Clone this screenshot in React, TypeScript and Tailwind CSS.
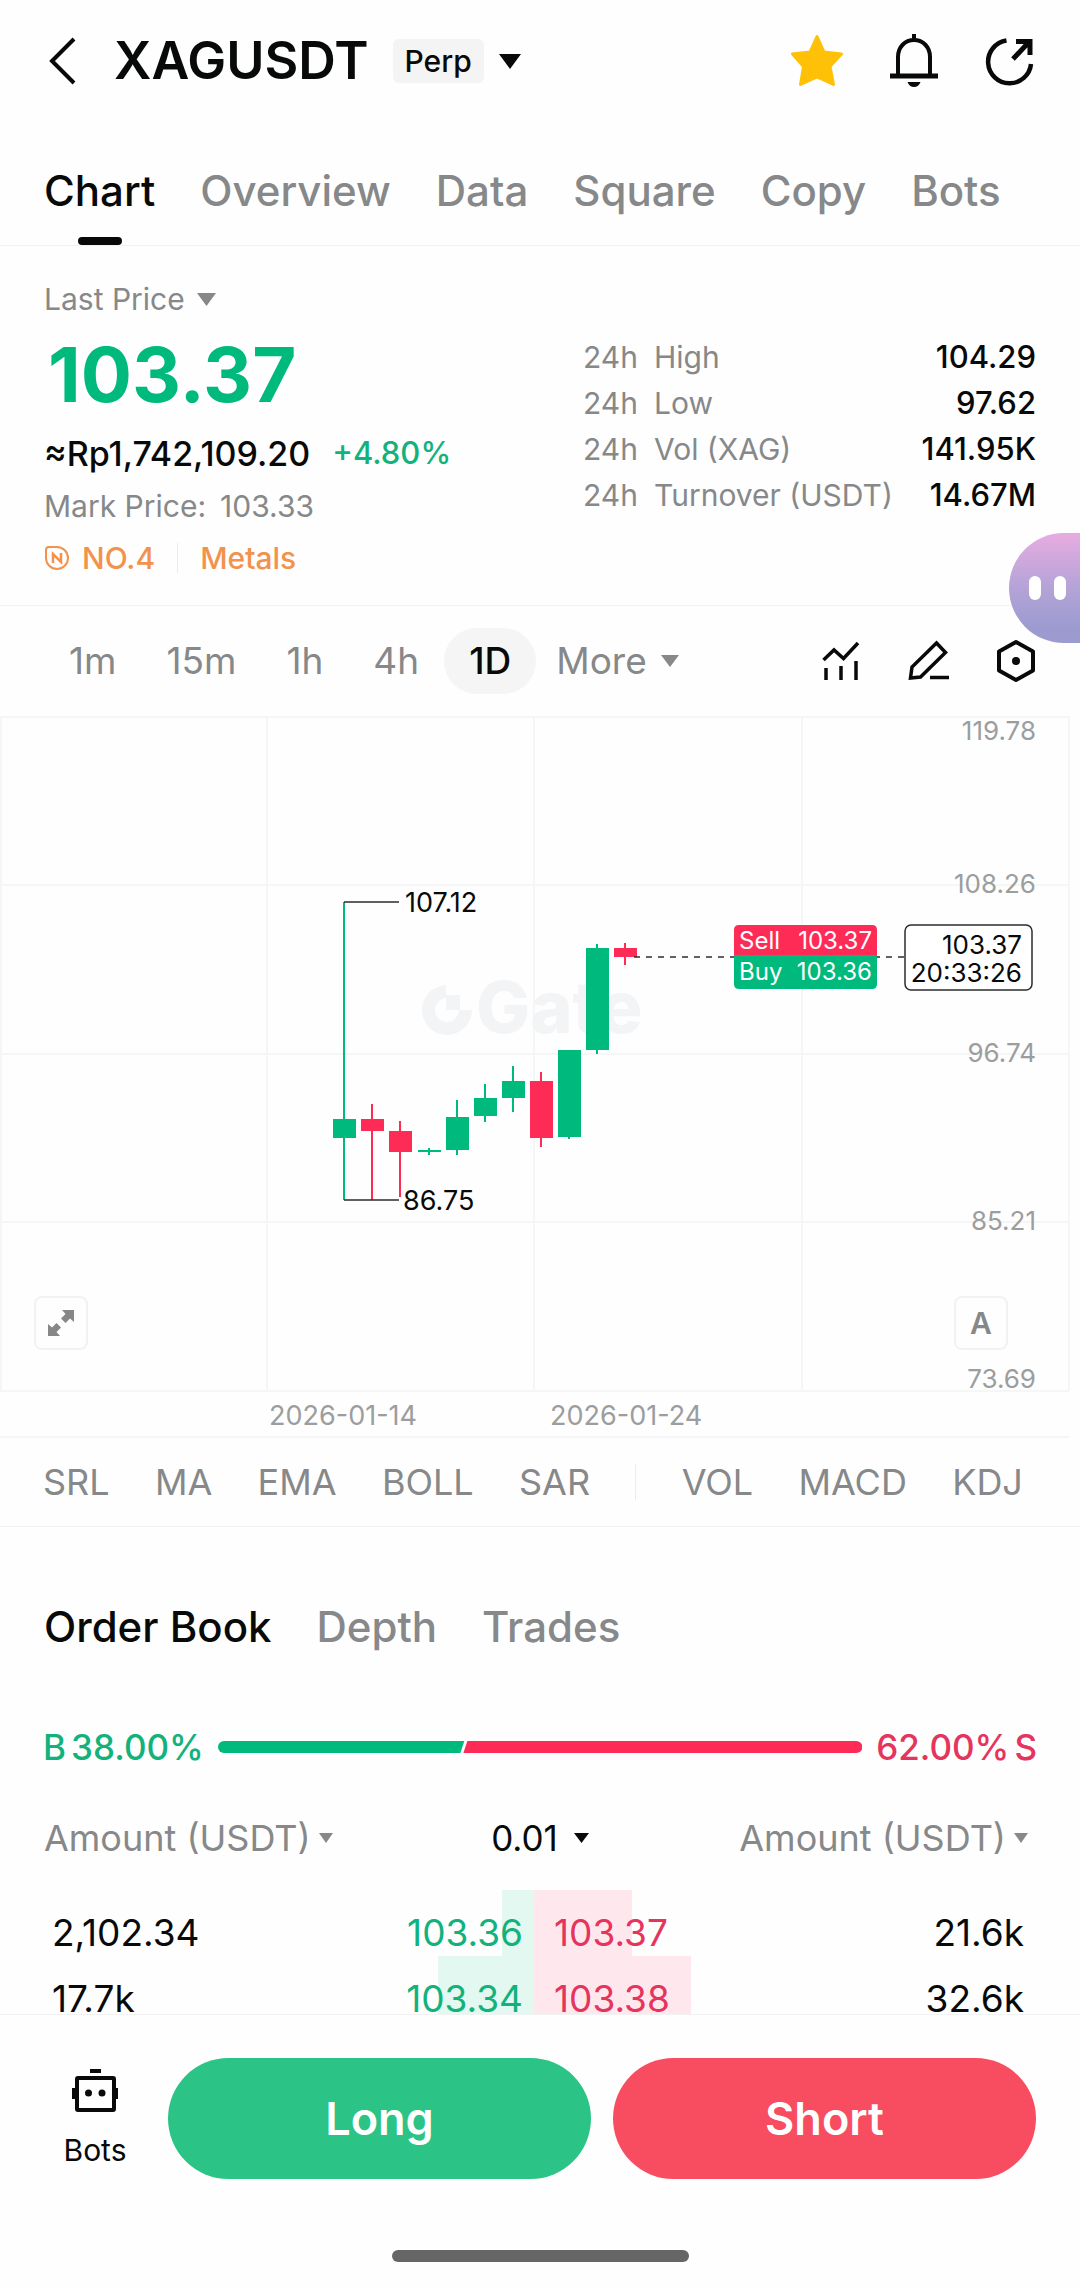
import { useState } from 'react'
import clsx from 'clsx'

const TABS = ['Chart', 'Overview', 'Data', 'Square', 'Copy', 'Bots']
const INTERVALS = ['1m', '15m', '1h', '4h', '1D']
const MAIN_INDICATORS = ['SRL', 'MA', 'EMA', 'BOLL', 'SAR']
const SUB_INDICATORS = ['VOL', 'MACD', 'KDJ']
const BOOK_TABS = ['Order Book', 'Depth', 'Trades']

const STATS = [
  { label: 'High', value: '104.29' },
  { label: 'Low', value: '97.62' },
  { label: 'Vol (XAG)', value: '141.95K' },
  { label: 'Turnover (USDT)', value: '14.67M' },
]

// depth is the share of the price column that is filled, in percent
const ORDERS = [
  { bidAmount: '2,102.34', bid: '103.36', bidDepth: 13, ask: '103.37', askAmount: '21.6k', askDepth: 40 },
  { bidAmount: '17.7k', bid: '103.34', bidDepth: 39, ask: '103.38', askAmount: '32.6k', askDepth: 64 },
]

const UP = '#00b97c'
const DOWN = '#ff2b57'

// chart space: x centre, body top/bottom, wick top/bottom
const CANDLES = [
  { x: 344, top: 403, bottom: 422, high: 186, low: 484, up: true },
  { x: 372, top: 403, bottom: 415, high: 388, low: 484, up: false },
  { x: 400, top: 415, bottom: 436, high: 405, low: 481, up: false },
  { x: 429, top: 434, bottom: 436, high: 432, low: 439, up: true },
  { x: 457, top: 401, bottom: 434, high: 384, low: 439, up: true },
  { x: 485, top: 382, bottom: 400, high: 368, low: 406, up: true },
  { x: 513, top: 365, bottom: 382, high: 350, low: 396, up: true },
  { x: 541, top: 365, bottom: 422, high: 356, low: 431, up: false },
  { x: 569, top: 334, bottom: 421, high: 334, low: 423, up: true },
  { x: 597, top: 232, bottom: 334, high: 228, low: 338, up: true },
  { x: 625, top: 232, bottom: 241, high: 227, low: 249, up: false },
]

const PRICE_LABELS = [
  { y: 24, text: '119.78' },
  { y: 177, text: '108.26' },
  { y: 346, text: '96.74' },
  { y: 514, text: '85.21' },
  { y: 672, text: '73.69' },
]

function Caret({ className }: { className?: string }) {
  return (
    <svg viewBox="0 0 20 14" preserveAspectRatio="none" className={clsx('shrink-0 fill-current', className)} aria-hidden="true">
      <path d="M0 0H20L10 14Z" />
    </svg>
  )
}

interface DropdownProps {
  label: string
  value: string
  className?: string
  caret: string
}

function Dropdown({ label, value, className, caret }: DropdownProps) {
  return (
    <label className={clsx('flex h-10 items-center', className)}>
      <select aria-label={label} className="field-sizing-content h-10 cursor-pointer appearance-none bg-transparent leading-10 outline-none">
        <option>{value}</option>
      </select>
      <Caret className={caret} />
    </label>
  )
}

function Header() {
  return (
    <header className="flex h-[122px] items-center pr-[46px] pl-12">
      <button aria-label="Back" className="cursor-pointer">
        <svg viewBox="0 0 28 48" className="h-12 w-7" fill="none" stroke="#080a0a" strokeWidth="4">
          <path d="M26 2 4 24 26 46" />
        </svg>
      </button>
      <h1 className="ml-[38px] text-[52px] leading-[60px] font-semibold">XAGUSDT</h1>
      <button className="ml-6 flex cursor-pointer items-center gap-[15px]">
        <span className="flex h-[44px] items-center rounded-md bg-[#f4f4f4] px-3 text-[30px] font-medium">Perp</span>
        <Caret className="h-[15px] w-[22px]" />
      </button>
      <div className="ml-auto flex items-center gap-[46px]">
        <button aria-label="Remove from favorites" className="cursor-pointer">
          <svg viewBox="0 0 54 54" className="h-[54px] w-[54px]" fill="#ffc107" stroke="#ffc107" strokeWidth="3" strokeLinejoin="round">
            <path d="M27 2.500 34 18 51.500 20 40 32.500 43.500 50.500 27 43 10.500 50.500 13.500 32.500 2.500 20 20 18Z" />
          </svg>
        </button>
        <button aria-label="Price alert" className="cursor-pointer">
          <svg viewBox="0 0 48 54" className="h-[54px] w-12" fill="none" stroke="#080a0a" strokeWidth="4">
            <path d="M24 0V6M8 41V23C8 13 15 6 24 6S40 13 40 23V41" />
            <path d="M0 42H48" strokeWidth="5" />
            <path d="M17.500 48H30.500C29.500 51 27 53 24 53S18.500 51 17.500 48Z" fill="#080a0a" stroke="none" />
          </svg>
        </button>
        <button aria-label="Share" className="cursor-pointer">
          <svg viewBox="0 0 50 50" className="h-[50px] w-[50px]" fill="none" stroke="#080a0a" strokeWidth="4.500">
            <path d="M22.500 4.500A21.500 21.500 0 1 0 47 28" />
            <path d="M29 23 45 6M32 5.500H46V19" strokeWidth="5" />
          </svg>
        </button>
      </div>
    </header>
  )
}

function SummaryPanel() {
  return (
    <section className="flex justify-between border-b border-[#f1f2f2] pr-11 pb-6 pl-11">
      <div className="pt-[33px]">
        <Dropdown label="Price type" value="Last Price" className="gap-3 text-[30px] text-[#868889]" caret="h-[13px] w-[19px]" />
        <p className="pl-1 text-[76px] leading-[110px] font-bold text-[#00b97c]">103.37</p>
        <p className="flex h-12 items-center gap-[22px] text-[34px] font-medium">
          <span>≈Rp1,742,109.20</span>
          <span className="text-[31px] text-[#12b27c]">+4.80%</span>
        </p>
        <p className="flex h-[58px] items-center gap-[14px] text-[30px] text-[#868889]">
          <span>Mark Price:</span>
          <span>103.33</span>
        </p>
        <div className="flex h-[46px] items-center text-[30px] font-medium text-[#f2924c]">
          <a href="#ranking" className="flex items-center gap-3">
            <svg viewBox="0 0 26 26" className="h-[26px] w-[26px]" fill="none" stroke="currentColor" strokeWidth="2" aria-hidden="true">
              <path d="M5 2H13A11 11 0 1 1 2 13V5A3 3 0 0 1 5 2Z" />
              <path d="M9 18V9L17 17V8" strokeWidth="2.500" />
            </svg>
            NO.4
          </a>
          <span className="mx-[22px] h-[30px] w-px bg-[#ebecec]" />
          <a href="#metals">Metals</a>
        </div>
      </div>
      <dl className="w-[453px] pt-[88px] text-[30px]">
        {STATS.map((stat) => (
          <div key={stat.label} className="flex h-[46px] items-center">
            <dt className="flex text-[#868889]">
              <span className="w-[71px]">24h</span>
              {stat.label}
            </dt>
            <dd className="ml-auto text-[31px] font-medium">{stat.value}</dd>
          </div>
        ))}
      </dl>
    </section>
  )
}

function AssistantBubble() {
  return (
    <button
      aria-label="Open assistant"
      className="absolute top-[533px] right-0 flex h-[110px] w-[71px] cursor-pointer items-center gap-[13px] rounded-l-[55px] bg-linear-to-b from-[#e3abe0] from-5% via-[#b8a4d8] via-45% to-[#9c9bd0] to-85% pl-5"
    >
      <span className="h-6 w-3 rounded-full bg-white" />
      <span className="h-6 w-3 rounded-full bg-white" />
    </button>
  )
}

function ChartToolbar() {
  const [interval, setInterval] = useState('1D')

  return (
    <div className="flex h-[110px] items-center justify-between px-11">
      <div className="flex items-center text-[37px] text-[#868889]">
        {INTERVALS.map((item) => (
          <button
            key={item}
            onClick={() => setInterval(item)}
            className={clsx('h-[66px] cursor-pointer rounded-full px-[25px]', item === interval && 'bg-[#f5f5f5] font-medium text-[#080a0a]')}
          >
            {item}
          </button>
        ))}
        <button className="flex cursor-pointer items-center gap-[14px] pl-[20px]">
          More
          <Caret className="h-3 w-[18px]" />
        </button>
      </div>
      <div className="flex items-center gap-[46px]">
        <button aria-label="Indicators" className="cursor-pointer">
          <svg viewBox="0 0 40 40" className="h-10 w-10" fill="none" stroke="#080a0a" strokeWidth="3.500">
            <path d="M1.500 19 12 9 21.500 17.500 36 2M4 27V39M19 25V39M34 20V39" />
          </svg>
        </button>
        <button aria-label="Drawing tools" className="cursor-pointer">
          <svg viewBox="0 0 42 42" className="h-[42px] w-[42px]" fill="none" stroke="#080a0a" strokeWidth="3.500">
            <path d="M28.500 3 37.500 12.500 12.500 37 2.500 38 4 27ZM22 37.500H41" />
          </svg>
        </button>
        <button aria-label="Chart settings" className="cursor-pointer">
          <svg viewBox="0 0 40 44" className="h-11 w-10" fill="none" stroke="#080a0a" strokeWidth="4" strokeLinejoin="round">
            <path d="M20 3 37 12.500V31.500L20 41 3 31.500V12.500Z" />
            <circle cx="20" cy="22" r="4" fill="#080a0a" stroke="none" />
          </svg>
        </button>
      </div>
    </div>
  )
}

function PriceChart() {
  return (
    <div className="relative">
      <svg viewBox="0 0 1080 722" className="block w-full" role="img" aria-label="XAGUSDT daily candles">
        <g stroke="#f5f6f6" strokeWidth="2">
          <path d="M0 1H1069M0 169H1069M0 338H1069M0 506H1069M0 675H1069M0 721H1069" />
          <path d="M1 0V675M267 0V675M534 0V675M802 0V675M1069 0V675" />
        </g>

        {/* Watermark */}
        <g fill="#f2f4f5">
          <path d="M446 269A25 25 0 1 0 472 294H459A12 12 0 1 1 446 282Z" />
          <path d="M446 279H460V294H446Z" />
          <text x="476" y="317" fontSize="72" fontWeight="800">Gate</text>
        </g>

        {CANDLES.map((candle) => (
          <g key={candle.x} fill={candle.up ? UP : DOWN}>
            <rect x={candle.x - 1} y={candle.high} width="2" height={candle.low - candle.high} />
            <rect x={candle.x - 11} y={candle.top} width="23" height={candle.bottom - candle.top} />
          </g>
        ))}

        <path d="M344 186H399M344 484H399" stroke="#2b2d2d" strokeWidth="1.500" />
        <path d="M634 241H905" stroke="#2b2d2d" strokeWidth="1.500" strokeDasharray="6 6" />
        <g fontSize="27" fill="#080a0a">
          <text x="405" y="196">107.12</text>
          <text x="403" y="494">86.75</text>
        </g>

        <g fontSize="26" fill="#9b9d9e">
          {PRICE_LABELS.map((label) => (
            <text key={label.text} x="1036" y={label.y} textAnchor="end">{label.text}</text>
          ))}
        </g>
        <g fontSize="27" fill="#9b9d9e">
          <text x="269" y="709">2026-01-14</text>
          <text x="550" y="709">2026-01-24</text>
        </g>

        {/* Best ask / bid */}
        <path d="M734 239V214Q734 209 739 209H872Q877 209 877 214V239Z" fill={DOWN} />
        <path d="M734 239H877V268Q877 273 872 273H739Q734 273 734 268Z" fill={UP} />
        <g fontSize="24" fill="#fff">
          <text x="739" y="233">Sell</text>
          <text x="872" y="233" textAnchor="end">103.37</text>
          <text x="739" y="264">Buy</text>
          <text x="872" y="264" textAnchor="end">103.36</text>
        </g>

        <rect x="905" y="209" width="127" height="65" rx="6" fill="#fff" stroke="#2b2d2d" strokeWidth="1.500" />
        <g fontSize="26" fill="#080a0a" textAnchor="end">
          <text x="1022" y="238">103.37</text>
          <text x="1022" y="266">20:33:26</text>
        </g>
      </svg>

      <button aria-label="Full screen" className="absolute bottom-[88px] left-[34px] flex h-[54px] w-[54px] cursor-pointer items-center justify-center rounded-lg border-2 border-[#f1f2f2] bg-[#fefefe]">
        <svg viewBox="0 0 26 26" className="h-[26px] w-[26px]" fill="#858788">
          <path d="M14 0H26V12L22 8.500 17.500 13 13 8.500 17.500 4ZM0 14 4 17.500 8.500 13 13 17.500 8.500 22 12 26H0Z" />
        </svg>
      </button>
      <button aria-label="Auto scale" className="absolute right-[72px] bottom-[88px] flex h-[54px] w-[54px] cursor-pointer items-center justify-center rounded-lg border-2 border-[#f1f2f2] bg-[#fefefe] text-[30px] font-semibold text-[#858788]">
        A
      </button>
    </div>
  )
}

function IndicatorBar() {
  return (
    <div className="flex h-[89px] items-center justify-between border-b border-[#f1f2f2] pr-[57px] pl-[43px] text-[36px] text-[#868889]">
      {MAIN_INDICATORS.map((name) => (
        <button key={name} className="cursor-pointer">{name}</button>
      ))}
      <span className="h-9 w-px bg-[#ebecec]" />
      {SUB_INDICATORS.map((name) => (
        <button key={name} className="cursor-pointer">{name}</button>
      ))}
    </div>
  )
}

function OrderBook() {
  const [tab, setTab] = useState('Order Book')

  return (
    <section className="pt-[75px]">
      <div className="flex gap-[45px] px-11 text-[42px] leading-[50px] font-medium">
        {BOOK_TABS.map((item) => (
          <button key={item} onClick={() => setTab(item)} className={clsx('cursor-pointer', item !== tab && 'text-[#868889]')}>
            {item}
          </button>
        ))}
      </div>

      <div className="mt-[75px] flex h-10 items-center gap-[14px] px-[43px] text-[35px] font-medium">
        <span className="flex gap-[5px] text-[#12b27c]">
          <span>B</span>
          <span>38.00%</span>
        </span>
        <svg viewBox="0 0 646 12" preserveAspectRatio="none" className="h-3 min-w-0 flex-1" aria-hidden="true">
          <path d="M6 0H247L243 12H6A6 6 0 0 1 6 0Z" fill={UP} />
          <path d="M250 0H640A6 6 0 0 1 640 12H246Z" fill={DOWN} />
        </svg>
        <span className="flex gap-[5px] text-[#e5345d]">
          <span>62.00%</span>
          <span>S</span>
        </span>
      </div>

      <div className="mt-[51px] grid grid-cols-[1fr_auto_1fr] px-11 text-[36px] text-[#868889]">
        <Dropdown label="Bid amount unit" value="Amount (USDT)" className="gap-2" caret="h-2.5 w-[14px]" />
        <Dropdown label="Price step" value="0.01" className="gap-4 text-[35px] text-[#080a0a]" caret="h-2.5 w-[15px]" />
        <Dropdown label="Ask amount unit" value="Amount (USDT)" className="justify-self-end gap-2 pr-2" caret="h-2.5 w-[14px]" />
      </div>

      <div className="mt-8 pr-14 pl-11">
        <table className="w-full table-fixed text-[37px] leading-[30px]">
          <tbody>
            {ORDERS.map((order) => (
              <tr key={order.bid} className="h-[66px] align-top last:h-[58px]">
                <td className="p-0 pt-7 pl-2">{order.bidAmount}</td>
                <td className="relative p-0 pt-7 pr-[11px] text-right text-[#12b27c]">
                  <span className="absolute inset-y-0 right-0 bg-[#e3f8f1]" style={{ width: `${order.bidDepth}%` }} />
                  <span className="relative">{order.bid}</span>
                </td>
                <td className="relative p-0 pt-7 pl-5 text-[#e5345d]">
                  <span className="absolute inset-y-0 left-0 bg-[#ffe8ed]" style={{ width: `${order.askDepth}%` }} />
                  <span className="relative">{order.ask}</span>
                </td>
                <td className="p-0 pt-7 text-right">{order.askAmount}</td>
              </tr>
            ))}
          </tbody>
        </table>
      </div>
    </section>
  )
}

function TradeBar() {
  return (
    <footer className="border-t border-[#f1f2f2] bg-[#fefefe] pt-[43px] pb-[27px]">
      <div className="flex items-center pr-11 pl-[62px]">
        <button className="flex w-[66px] cursor-pointer flex-col items-center gap-4 pt-1 text-[30px]">
          <svg viewBox="0 0 46 44" className="h-11 w-[46px]" fill="none" stroke="#080a0a" strokeWidth="4" aria-hidden="true">
            <rect x="5" y="10" width="37" height="32" rx="1" />
            <path d="M18 3H29M2 20V31M44 20V31" />
            <circle cx="16.500" cy="25" r="3.500" fill="#080a0a" stroke="none" />
            <circle cx="30" cy="25" r="3.500" fill="#080a0a" stroke="none" />
          </svg>
          Bots
        </button>
        <button className="ml-10 h-[121px] flex-1 cursor-pointer rounded-full bg-[#2bc486] text-[45px] font-semibold text-white">Long</button>
        <button className="ml-[22px] h-[121px] flex-1 cursor-pointer rounded-full bg-[#f84c60] text-[45px] font-semibold text-white">Short</button>
      </div>
      <div className="mx-auto mt-[71px] h-3 w-[297px] rounded-full bg-[#666]" />
    </footer>
  )
}

export default function App() {
  const [tab, setTab] = useState('Chart')

  return (
    <div className="relative bg-[#fefefe] font-['Inter','Liberation_Sans',sans-serif] text-[#080a0a]">
      <Header />

      <nav className="flex h-[124px] items-end gap-[45px] border-b border-[#f1f2f2] px-11 text-[42px] leading-[50px] font-medium">
        {TABS.map((item) => (
          <button
            key={item}
            onClick={() => setTab(item)}
            className={clsx('flex cursor-pointer flex-col items-center gap-[21px]', item !== tab && 'text-[#868889]')}
          >
            {item}
            <span className={clsx('h-2 w-11 rounded-full', item === tab && 'bg-[#080a0a]')} />
          </button>
        ))}
      </nav>

      <SummaryPanel />
      <AssistantBubble />
      <ChartToolbar />
      <PriceChart />
      <IndicatorBar />
      <OrderBook />
      <TradeBar />
    </div>
  )
}
